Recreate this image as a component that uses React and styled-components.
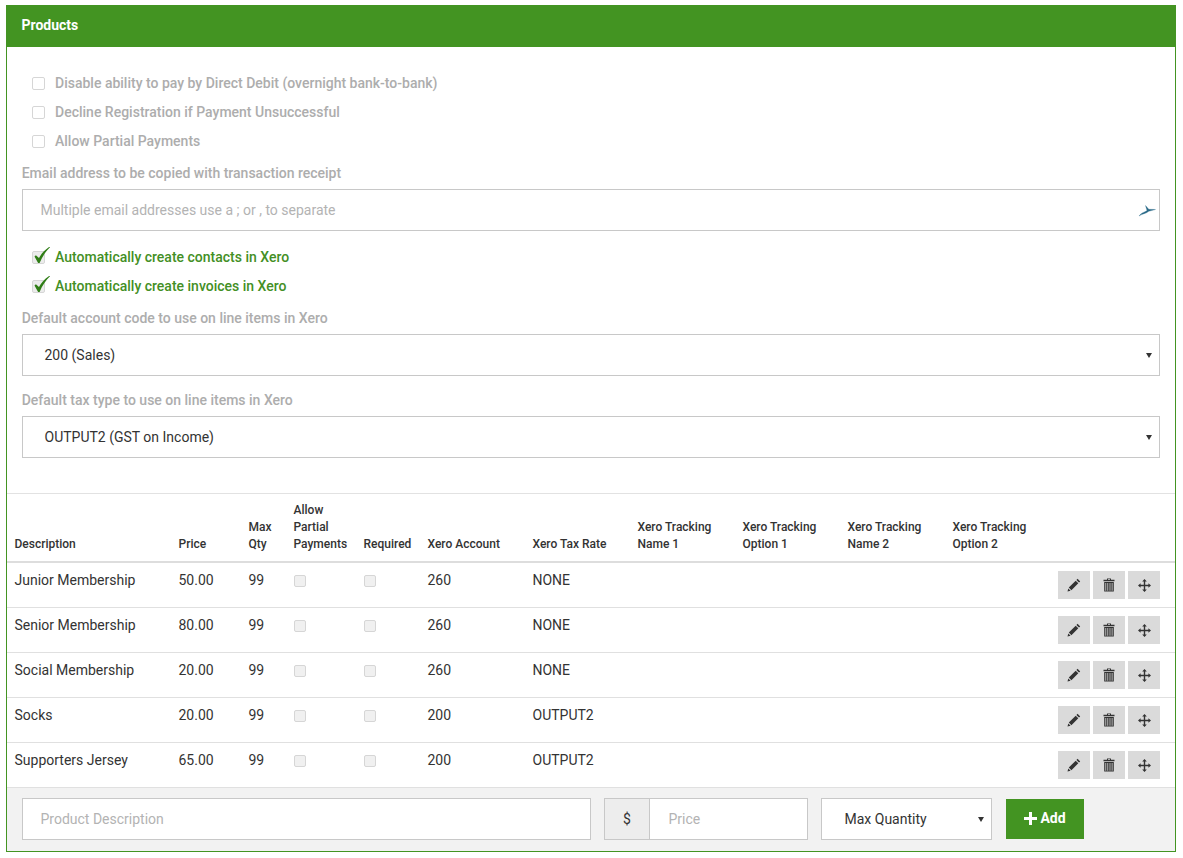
import React from "react";
import styled, { createGlobalStyle } from "styled-components";

const GREEN = "#439422";

const Global = createGlobalStyle`
  html, body { margin: 0; padding: 0; background: #fff; }
  body { font-family: Roboto, "Liberation Sans", sans-serif; font-size: 14px; color: #333; }
  * { box-sizing: border-box; }
`;

const Page = styled.div`
  padding: 5px 7px 0 6px;
`;
const Panel = styled.section`
  border: 1px solid ${GREEN};
  height: 847px;
  display: flex;
  flex-direction: column;
`;
const PanelHeader = styled.header`
  background: ${GREEN};
  color: #fff;
  font-weight: 700;
  font-size: 14px;
  height: 42px;
  margin: -1px -1px 0;
  padding: 0 15.5px 2px;
  flex: none;
  display: flex;
  align-items: center;
`;
const Settings = styled.div`
  padding: 21px 15px 0;
  height: 446px;
  flex: none;
`;
const CheckRow = styled.label`
  display: flex;
  align-items: center;
  height: 29px;
  padding-left: 10px;
  font-weight: 500;
  color: ${p => (p.$on ? "#438f25" : "#adadad")};
`;
const BoxWrap = styled.span`
  position: relative;
  width: 13px;
  height: 13px;
  margin-right: 10px;
  margin-top: 2px;
  flex: none;
  display: block;
`;
const Box = styled.input.attrs({ type: "checkbox", readOnly: true })`
  appearance: none;
  display: block;
  margin: 0;
  width: ${p => (p.$small ? "12px" : "13px")};
  height: ${p => (p.$small ? "12px" : "13px")};
  border: 1px solid #d6d6d6;
  border-radius: 2px;
  background: ${p => (p.$small ? "#f0f0f0" : p.$on ? "#ececec" : "#fff")};
`;
const Tick = styled.svg`
  position: absolute;
  left: 1px;
  top: -4px;
  width: 17px;
  height: 17px;
`;
const FieldLabel = styled.div`
  font-weight: 500;
  color: #adadad;
  height: 16px;
  line-height: 16px;
  margin-bottom: 8px;
  margin-top: ${p => p.$mt || 0}px;
  margin-left: -.3px;
`;
const InputWrap = styled.div`
  position: relative;
  margin-bottom: 11px;
`;
const TextInput = styled.input`
  display: block;
  width: ${p => p.$w || "100%"};
  height: 42px;
  flex: none;
  border: 1px solid #c8c8c8;
  background: #fff;
  padding: 0 17.5px 0 ${p => p.$pl || 17.5}px;
  font: 400 14px Roboto, sans-serif;
  color: #333;
  outline: none;
  border-radius: 0;
  &::placeholder { color: #b3b3b3; opacity: 1; }
`;
const XeroMark = styled.svg`
  position: absolute;
  right: 3px;
  top: 12px;
  width: 20px;
  height: 18px;
`;
const SelectBox = styled.div`
  height: 42px;
  width: ${p => p.$w || "100%"};
  margin-bottom: ${p => p.$mb || 0}px;
  flex: none;
  border: 1px solid #c8c8c8;
  background: #fff;
  display: flex;
  align-items: center;
  justify-content: space-between;
  padding: 0 7px 0 ${p => p.$pl || 21.5}px;
  color: #333;
`;
const Caret = styled.span`
  width: 0;
  height: 0;
  border-left: 3px solid transparent;
  border-right: 3px solid transparent;
  border-top: 5px solid #333;
`;
const Table = styled.table`
  width: 100%;
  border-collapse: separate;
  border-spacing: 0;
  table-layout: fixed;
  border-top: 1px solid #e2e2e2;
  flex: none;
`;
const Th = styled.th`
  text-align: left;
  vertical-align: bottom;
  font-size: 12px;
  font-weight: 500;
  line-height: 17px;
  color: #333;
  padding: 0 0 8px 7.5px;
  height: 69px;
  border-bottom: 2px solid #ddd;
`;
const Td = styled.td`
  vertical-align: top;
  padding: 9px 0 0 7.5px;
  height: 45px;
  line-height: 17px;
  color: #333;
  border-bottom: 1px solid #e0e0e0;
`;
const CellBox = styled.div`
  padding: 3px 0 0 .5px;
`;
const Actions = styled.div`
  display: flex;
  gap: 3px;
  margin-left: .5px;
`;
const IconBtn = styled.button`
  width: 32px;
  height: 28px;
  border: 0;
  padding: 0;
  flex: none;
  background: #dadada;
  display: flex;
  align-items: center;
  justify-content: center;
  margin-top: -1px;
  svg { display: block; }
`;
const Footer = styled.footer`
  flex: 1;
  background: #f2f2f2;
  display: flex;
  align-items: center;
  padding: 0 15px 1px;
`;
const Addon = styled.span`
  width: 45px;
  height: 42px;
  flex: none;
  margin-left: 13px;
  background: #ededed;
  border: 1px solid #c8c8c8;
  border-right: 0;
  display: flex;
  align-items: center;
  justify-content: center;
  color: #333;
`;
const AddBtn = styled.button`
  margin-left: 14px;
  width: 78px;
  height: 40px;
  background: ${GREEN};
  border: 0;
  color: #fff;
  font: 700 14px Roboto, sans-serif;
  display: flex;
  align-items: center;
  justify-content: center;
  gap: 3px;
  padding: 0 0 2px 0;
`;
const Gap = styled.span`
  width: 13px;
  flex: none;
`;

const CheckItem = ({ label, on }) => (
  <CheckRow $on={on}>
    <BoxWrap>
      <Box $on={on} />
      {on && (
        <Tick viewBox="0 0 17 17">
          <path d="M1.5 9.5 L2.9 8.2 L6 11 C8.3 6.8 11.5 3 16.8 -.5 L17 .3 C12.8 4.5 9.3 9.5 6.6 16 L5.1 16 Z" fill="#2f7d16" />
        </Tick>
      )}
    </BoxWrap>
    {label}
  </CheckRow>
);

const Pencil = () => (
  <svg width="14" height="14" viewBox="0 0 14 14">
    <path d="M10.6 .8 L13.2 3.4 L12 4.6 L9.4 2 Z M8.7 2.7 L11.3 5.3 L4.4 12.2 L1.8 9.6 Z M1.3 10.4 L3.6 12.7 L.5 13.5 Z" fill="#333" />
  </svg>
);
const Trash = () => (
  <svg width="12" height="14" viewBox="0 0 12 14">
    <path d="M4 .5 H8 V1.8 H11.5 V3.2 H.5 V1.8 H4 Z M5 1 V1.8 H7 V1 Z" fill="#333" fillRule="evenodd" />
    <path d="M1.2 4 H10.8 V13.5 H1.2 Z M2.4 5 V12.7 H3.2 V5 Z M4.4 5 V12.7 H5.2 V5 Z M6.6 5 V12.7 H7.4 V5 Z M8.7 5 V12.7 H9.5 V5 Z" fill="#333" fillRule="evenodd" />
  </svg>
);
const Move = () => (
  <svg width="13" height="13" viewBox="0 0 13 13">
    <path d="M6.5 0 L8.8 2.6 H7.2 V5.8 H10.4 V4.2 L13 6.5 L10.4 8.8 V7.2 H7.2 V10.4 H8.8 L6.5 13 L4.2 10.4 H5.8 V7.2 H2.6 V8.8 L0 6.5 L2.6 4.2 V5.8 H5.8 V2.6 H4.2 Z" fill="#333" />
  </svg>
);

const rows = [
  ["Junior Membership", "50.00", "260", "NONE"],
  ["Senior Membership", "80.00", "260", "NONE"],
  ["Social Membership", "20.00", "260", "NONE"],
  ["Socks", "20.00", "200", "OUTPUT2"],
  ["Supporters Jersey", "65.00", "200", "OUTPUT2"],
];
const widths = [164, 70, 45, 70, 64, 105, 105, 105, 105, 105, 105];
const heads = [
  ["Description"], ["Price"], ["Max", "Qty"], ["Allow", "Partial", "Payments"], ["Required"],
  ["Xero Account"], ["Xero Tax Rate"], ["Xero Tracking", "Name 1"], ["Xero Tracking", "Option 1"],
  ["Xero Tracking", "Name 2"], ["Xero Tracking", "Option 2"], [],
];

export default function App() {
  return (
    <Page>
      <Global />
      <Panel>
        <PanelHeader>Products</PanelHeader>
        <Settings>
          <CheckItem label="Disable ability to pay by Direct Debit (overnight bank-to-bank)" />
          <CheckItem label="Decline Registration if Payment Unsuccessful" />
          <CheckItem label="Allow Partial Payments" />
          <FieldLabel $mt={10}>Email address to be copied with transaction receipt</FieldLabel>
          <InputWrap>
            <TextInput placeholder="Multiple email addresses use a ; or , to separate" />
            <XeroMark viewBox="0 0 20 18">
              <path d="M2 15 C5 11 8 11.3 10 9.5 L8.5 4.5 L11.8 8.3 L18.5 8.5 L11.8 10.3 C9 12.6 5.5 12.8 2 15 Z" fill="#2a6a88" stroke="#2a6a88" strokeWidth=".3" />
            </XeroMark>
          </InputWrap>
          <CheckItem on label="Automatically create contacts in Xero" />
          <CheckItem on label="Automatically create invoices in Xero" />
          <FieldLabel $mt={10}>Default account code to use on line items in Xero</FieldLabel>
          <SelectBox $mb={16}>200 (Sales)<Caret /></SelectBox>
          <FieldLabel>Default tax type to use on line items in Xero</FieldLabel>
          <SelectBox>OUTPUT2 (GST on Income)<Caret /></SelectBox>
        </Settings>
        <Table>
          <colgroup>
            {widths.map((w, i) => <col key={i} style={{ width: w }} />)}
            <col />
          </colgroup>
          <thead>
            <tr>
              {heads.map((h, i) => (
                <Th key={i}>
                  {h.map((l, j) => <div key={j}>{l}</div>)}
                </Th>
              ))}
            </tr>
          </thead>
          <tbody>
            {rows.map(r => (
              <tr key={r[0]}>
                <Td>{r[0]}</Td>
                <Td>{r[1]}</Td>
                <Td>99</Td>
                <Td><CellBox><Box $small /></CellBox></Td>
                <Td><CellBox><Box $small /></CellBox></Td>
                <Td>{r[2]}</Td>
                <Td>{r[3]}</Td>
                <Td /><Td /><Td /><Td />
                <Td>
                  <Actions>
                    <IconBtn><Pencil /></IconBtn>
                    <IconBtn><Trash /></IconBtn>
                    <IconBtn><Move /></IconBtn>
                  </Actions>
                </Td>
              </tr>
            ))}
          </tbody>
        </Table>
        <Footer>
          <TextInput $w="569px" placeholder="Product Description" />
          <Addon>$</Addon>
          <TextInput $w="159px" $pl={18.5} placeholder="Price" />
          <Gap />
          <SelectBox $w="171px" $pl={22.5}>Max Quantity<Caret /></SelectBox>
          <AddBtn>
            <svg width="13" height="13" viewBox="0 0 13 13"><path d="M5 0 H8 V5 H13 V8 H8 V13 H5 V8 H0 V5 H5 Z" fill="#fff" /></svg>
            Add
          </AddBtn>
        </Footer>
      </Panel>
    </Page>
  );
}
